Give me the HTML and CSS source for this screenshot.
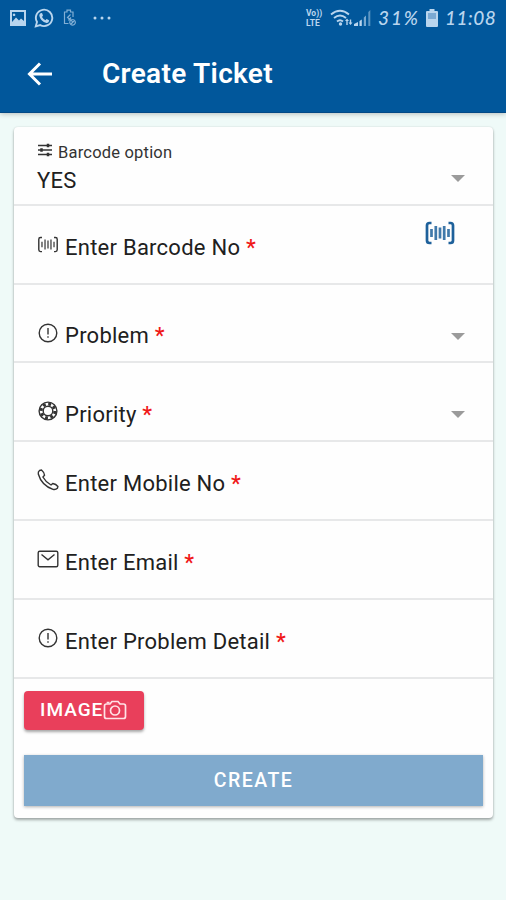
FILE: index.html
```html
<!DOCTYPE html>
<html lang="en">
<head>
<meta charset="utf-8">
<title>Create Ticket</title>
<link rel="stylesheet" href="styles.css">
</head>
<body>
<svg class="defs" aria-hidden="true">
  <symbol id="alert" viewBox="0 0 22 22"><circle cx="11" cy="11" r="8.8"/><path d="M11 6v6.5M11 14.3v1.4"/></symbol>
  <symbol id="barcode" viewBox="0 0 30 24"><path class="frame" d="M6.500 2H4.500Q2 2 2 4.500V19.500Q2 22 4.500 22H6.500M23.500 2H25.500Q28 2 28 4.500V19.500Q28 22 25.500 22H23.500"/><path class="bars" d="M6.500 8v8M10.800 5v14M15 6.500v11M19.200 5v14M23.500 8v8"/></symbol>
</svg>
<header>
  <div class="status">
    <div class="notices">
      <svg width="18" height="18" viewBox="0 0 18 18"><path fill-rule="evenodd" fill="currentColor" d="M1 1H17V17H1ZM3 3V13L7 8.500L10 11.500L12 9.500L15 12V3ZM5 4.500a1.300 1.300 0 1 0 .1 0Z"/></svg>
      <svg class="whatsapp" width="20" height="20" viewBox="0 0 20 20"><path fill="none" stroke="currentColor" stroke-width="1.900" d="M1.800 18.300 3 14A8.200 8.200 0 1 1 6.200 17.100Z"/><path fill="currentColor" d="M6.500 5.200 8 5.100 9 7.500 8 9Q9.300 11.200 11.500 12.200L12.600 11 15 12.200Q15 15 12.500 14.900 6.500 13.700 5.300 7.800 5.200 6.100 6.500 5.200Z"/></svg>
      <svg class="saver" width="14" height="18" viewBox="0 0 14 18"><path fill="none" stroke="currentColor" stroke-width="1.200" d="M5.500 14.500H1.500V3H4V1.200H7.500V3H10V8M7.500 5.500 4.500 8.500 9.500 12.500M8 8.500 5.500 11.500M9.500 10.500a2.800 2.800 0 1 0 .1 0M8 15l3-3"/></svg>
      <svg class="dots" width="20" height="6" viewBox="0 0 20 6" fill="currentColor"><circle cx="3" cy="3" r="1.500"/><circle cx="10" cy="3" r="1.500"/><circle cx="17" cy="3" r="1.500"/></svg>
    </div>
    <div class="signals">
      <span class="volte"><span>Vo))</span><span>LTE</span></span>
      <svg class="wifi" width="24" height="18" viewBox="0 0 24 18"><g fill="none" stroke="currentColor" stroke-width="1.900"><path d="M1 5.500Q10-2 19 5.500M4 9Q10 4 16 9M7 12.500Q10 10 13 12.500"/></g><circle cx="10.500" cy="15" r="1.700" fill="currentColor"/><path fill="currentColor" d="M15 12l2-2.500 2 2.500h-1.300v4h-1.400v-4ZM18.500 13.500h1.300v-3h1.400v3h1.300l-2 2.500Z"/></svg>
      <svg class="cell" width="18" height="18" viewBox="0 0 18 18" fill="currentColor"><path d="M0 17v-2l4-2v4ZM5.500 12l2.300-1.500V17H5.500Z"/><path opacity=".65" d="M9.800 8.500 12 6.500V17H9.800Z"/><path opacity=".5" d="M14.300 3 16.300 1V17h-2Z"/></svg>
      <span class="percent">31%</span>
      <svg class="battery" width="12" height="18" viewBox="0 0 12 18"><path fill="currentColor" d="M3.500 0h5v2H11q1 0 1 1v14q0 1-1 1H1q-1 0-1-1V3q0-1 1-1h2.500Z"/><path fill="#0758a0" opacity=".35" d="M2 4h8v6H2Z"/></svg>
      <span class="clock">11:08</span>
    </div>
  </div>
  <div class="bar">
    <svg class="back" width="28" height="26" viewBox="0 0 28 26"><path d="M26 13H4M14 2.500 3.500 13 14 23.500"/></svg>
    <h1>Create Ticket</h1>
  </div>
</header>
<main class="card">
  <div class="row option">
    <div class="field">
      <div class="small"><svg width="16" height="14" viewBox="0 0 16 14"><path d="M1 2.500h14M1 7h14M1 11.500h14"/><path class="knobs" d="M11 .8v3.400M4.500 5.300v3.400M11 9.800v3.400"/></svg><span>Barcode option</span></div>
      <div class="value">YES</div>
    </div>
    <span class="caret"></span>
  </div>
  <div class="row code"><svg class="icon mini-code"><use href="#barcode"/></svg><span class="label">Enter Barcode No <b>*</b></span><svg class="scan"><use href="#barcode"/></svg></div>
  <div class="row select first"><svg class="icon"><use href="#alert"/></svg><span class="label">Problem <b>*</b></span><span class="caret"></span></div>
  <div class="row select"><svg class="icon" viewBox="0 0 22 22"><circle cx="11" cy="11" r="8.900"/><circle cx="11" cy="11" r="4.800"/><circle class="ring" cx="11" cy="11" r="6.900"/></svg><span class="label">Priority <b>*</b></span><span class="caret"></span></div>
  <div class="row entry"><svg class="icon" viewBox="0 0 22 22"><path d="M2.500 1.500 4.500 1Q7 3 7.500 6.200L5.900 8Q8.800 13.200 14 16L15.800 14.500Q19 15 20.900 17.500L20.400 19.300Q18.700 21 16 20.400 4.500 16.300 1.300 5 .9 2.700 2.500 1.500Z"/></svg><span class="label">Enter Mobile No <b>*</b></span></div>
  <div class="row entry"><svg class="icon" viewBox="0 0 22 22"><rect x="1.200" y="3.200" width="19.600" height="15.600" rx="1.500"/><path d="M4.500 6.500 11 11.800 17.500 6.500"/></svg><span class="label">Enter Email <b>*</b></span></div>
  <div class="row entry"><svg class="icon"><use href="#alert"/></svg><span class="label">Enter Problem Detail <b>*</b></span></div>
  <div class="actions">
    <button class="image"><span>IMAGE</span><svg width="24" height="20" viewBox="0 0 24 20"><path d="M3.500 4H7L9 1.500H15L17 4H20.500Q22.500 4 22.500 6V16.500Q22.500 18.500 20.500 18.500H3.500Q1.500 18.500 1.500 16.500V6Q1.500 4 3.500 4Z"/><circle cx="12" cy="10.500" r="4.500"/><path d="M4.500 3.500V2.700h2"/></svg></button>
    <button class="create">CREATE</button>
  </div>
</main>
</body>
</html>
```
FILE: styles.css
```css
* { box-sizing: border-box; }
body {
  margin: 0;
  height: 900px;
  overflow: hidden;
  background: #effaf8;
  font-family: Roboto, sans-serif;
  color: #202020;
}
.defs { display: block; width: 0; height: 0; }
header {
  height: 113px;
  background: #01579b;
  border-bottom: 1px solid #034986;
  box-shadow: 0 1px 5px rgba(0, 0, 0, .24);
  color: #fff;
}
.status {
  height: 35px;
  padding: 0 11px 0 9px;
  display: flex;
  justify-content: space-between;
  align-items: center;
  color: #b9d5ee;
}
.notices, .signals { display: flex; align-items: center; }
.whatsapp { margin-left: 7px; }
.saver { margin-left: 9px; opacity: .7; }
.dots { margin-left: 15px; }
.volte {
  display: flex;
  flex-direction: column;
  width: 18px;
  font: 700 8.500px/10px Roboto, sans-serif;
  letter-spacing: 0;
}
.wifi { margin-left: 6px; }
.percent, .clock { font: italic 500 19px/24px Lato, sans-serif; }
.percent { width: 42px; margin-left: 6px; letter-spacing: 1.900px; }
.battery { margin-left: 6px; }
.clock { width: 50px; margin-left: 7px; letter-spacing: .5px; white-space: nowrap; }
.bar { height: 77px; padding: 0 26px; display: flex; align-items: center; }
.back { fill: none; stroke: #fff; stroke-width: 3; }
h1 { margin: 0 0 0 48px; font-size: 28px; line-height: 34px; font-weight: 600; letter-spacing: .3px; }
.card {
  width: 479px;
  height: 691px;
  margin: 14px 0 0 14px;
  background: #fefefe;
  border-radius: 4px;
  box-shadow: 0 2px 3px rgba(0, 0, 0, .32), 0 0 2px rgba(0, 0, 0, .12);
}
.row {
  height: 79px;
  padding: 0 28px 0 23px;
  display: flex;
  align-items: center;
  border-bottom: 2px solid #e7e8e9;
}
.option { justify-content: space-between; }
.field { height: 70px; padding-top: 12px; }
.small { display: flex; align-items: center; gap: 5px; font-size: 16.500px; line-height: 20px; letter-spacing: .2px; color: #333; }
.small svg { margin-bottom: 5px; fill: none; stroke: #333; stroke-width: 1.300; }
.small .knobs { stroke-width: 2.500; }
.value { margin-top: 3px; font-size: 22px; line-height: 30px; letter-spacing: .3px; }
.icon {
  width: 22px;
  height: 22px;
  flex: none;
  fill: none;
  stroke: #333;
  stroke-width: 1.400;
}
.label { margin: 6px 0 0 6px; font-size: 22px; line-height: 30px; letter-spacing: .25px; white-space: nowrap; }
.label b { font-weight: 500; color: #f01818; }
.select { padding-top: 20px; }
.select .icon { margin-bottom: 1px; }
.first { height: 78px; }
.entry .icon { margin-bottom: 1px; }
.ring { stroke-width: 3; stroke-dasharray: 2.900 2.520; }
.mini-code { height: 17px; stroke-width: 2; }
.bars { opacity: .85; }
.scan { width: 30px; height: 24px; margin: 0 10px 24px auto; fill: none; stroke: #1e619b; stroke-width: 2.700; }
.caret { margin: 6px 0 0 auto; border: 7px solid transparent; border-top-color: #9b9b9b; border-bottom: 0; }
.option .caret { margin-top: 26px; }
.actions { padding: 12px 10px 11px; display: flex; flex-direction: column; align-items: flex-start; }
button { border: 0; color: #fff; font-family: Roboto, sans-serif; font-weight: 500; }
.image {
  width: 120px;
  height: 39px;
  padding: 0 17px 2px 16px;
  display: flex;
  align-items: center;
  background: #e93f5b;
  border-radius: 4px;
  box-shadow: 0 2px 3px rgba(0, 0, 0, .35);
  font-size: 19px;
  letter-spacing: 1px;
}
.image svg { flex: none; fill: none; stroke: #ffe2e6; stroke-width: 1.700; }
.create {
  width: 459px;
  height: 51px;
  padding-bottom: 2px;
  margin-top: 25px;
  background: #80aacd;
  box-shadow: 0 1px 3px rgba(0, 0, 0, .3);
  font-size: 19.500px;
  letter-spacing: 1.500px;
}
```
